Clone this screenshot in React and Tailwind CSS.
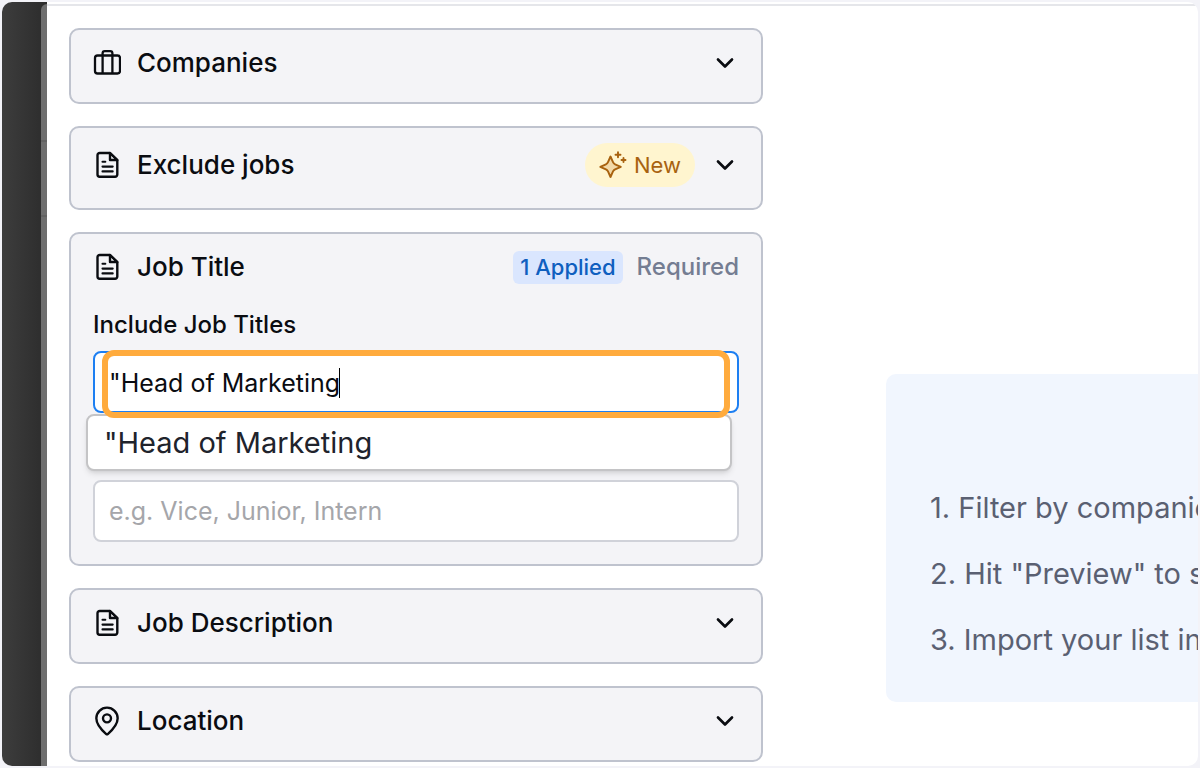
import { useState } from 'react'
import { ChevronDown, MapPin } from 'lucide-react'

function SuitcaseIcon() {
  return (
    <svg
      viewBox="0 0 28 28"
      className="size-7"
      fill="none"
      stroke="currentColor"
      strokeWidth="2.3"
      strokeLinejoin="round"
      aria-hidden="true"
    >
      <rect x="2" y="6.5" width="25" height="18" rx="2.6" />
      <path d="M9.6 24.500V4.300a2.200 2.200 0 0 1 2.200-2.200h5.400a2.200 2.200 0 0 1 2.200 2.200V24.500" />
    </svg>
  )
}

function DocumentIcon() {
  return (
    <svg
      viewBox="0 0 28 28"
      className="size-7"
      fill="none"
      stroke="currentColor"
      strokeWidth="2.4"
      strokeLinecap="round"
      strokeLinejoin="round"
      aria-hidden="true"
    >
      <path d="M17 2H6.700A2.200 2.200 0 0 0 4.500 4.200V23.500a2.200 2.200 0 0 0 2.200 2.200h15.400a2.200 2.200 0 0 0 2.200-2.200V9L17 2z" />
      <path d="M17 2v7h7.300z" />
      <path d="M9.500 10.800h2.800M9.500 15.600h10.200M9.500 20.400h10.200" strokeWidth="2.100" />
    </svg>
  )
}

function SparkleIcon() {
  return (
    <svg
      viewBox="0 0 28 28"
      className="size-7"
      fill="none"
      stroke="currentColor"
      strokeWidth="1.9"
      strokeLinecap="round"
      strokeLinejoin="round"
      aria-hidden="true"
    >
      <path
        d="M11.500 5.500l2.500 5.700a4 4 0 0 0 2.100 2.100l5.700 2.500-5.700 2.500a4 4 0 0 0-2.100 2.100L11.500 26l-2.500-5.600a4 4 0 0 0-2.100-2.100l-5.600-2.500 5.600-2.500a4 4 0 0 0 2.100-2.100z"
        fill="#f2d9a8"
      />
      <path d="M19 1.200v5M16.500 3.700h5M24.500 7v4M22.500 9h4" />
    </svg>
  )
}

function FilterCard({ icon, title, aside, children }) {
  return (
    <section className="rounded-[10px] border-2 border-[#bfc3ce] bg-[#f4f4f7] px-[22px] pt-[15px] pb-[21px]">
      <div className="flex items-center">
        <span className="flex w-7 shrink-0 justify-center">{icon}</span>
        <h2 className="ml-4 text-[26px] leading-9 font-medium">{title}</h2>
        <div className="ml-auto flex items-center">{aside}</div>
      </div>
      {children}
    </section>
  )
}

function ExpandButton({ label }) {
  return (
    <button type="button" aria-label={`Expand ${label}`} className="flex w-7 justify-center">
      <ChevronDown className="size-7" strokeWidth={2.3} />
    </button>
  )
}

const steps = ['1. Filter by companie', '2. Hit "Preview" to s', '3. Import your list in']

export default function App() {
  const [include, setInclude] = useState('"Head of Marketing')
  const [exclude, setExclude] = useState('')

  return (
    <div className="h-screen bg-[#f3f3f8] p-[2px] font-['Inter',sans-serif] text-[#0a0c11]">
      <div className="flex h-full overflow-hidden rounded-[10px] bg-white">
        <div className="flex w-[45px] shrink-0 bg-linear-to-r from-[#3d3d3d] to-[#2c2c2c]">
          <div className="mt-[2px] ml-auto flex w-[6px] flex-col gap-[73px] rounded-tl-md bg-[#6e6e6e] pt-[136px]">
            <span className="h-[2px] bg-[#636363]" />
            <span className="h-[2px] bg-[#636363]" />
          </div>
        </div>

        <main className="mt-[2px] flex min-w-0 flex-1 border-t-2 border-[#e5e6ea]">
          <div className="ml-[22px] flex w-[694px] shrink-0 flex-col gap-[22px] pt-[22px]">
            <FilterCard
              icon={<SuitcaseIcon />}
              title="Companies"
              aside={<ExpandButton label="Companies" />}
            />

            <FilterCard
              icon={<DocumentIcon />}
              title="Exclude jobs"
              aside={
                <>
                  <span className="mr-4 flex h-11 items-center gap-[7px] rounded-full bg-[#fff5cf] px-[14px] text-[22px] text-[#a8620f]">
                    <SparkleIcon />
                    New
                  </span>
                  <ExpandButton label="Exclude jobs" />
                </>
              }
            />

            <FilterCard
              icon={<DocumentIcon />}
              title="Job Title"
              aside={
                <>
                  <span className="mr-[14px] rounded-md bg-[#dae6fe] px-[7px] text-[22px] leading-[33px] font-medium text-[#0f5fbf]">
                    1 Applied
                  </span>
                  <span className="text-2xl font-medium text-[#747d92]">Required</span>
                </>
              }
            >
              <label htmlFor="include" className="mt-[22px] block text-2xl leading-9 font-medium">
                Include Job Titles
              </label>
              <div className="relative mt-2">
                <input
                  id="include"
                  type="text"
                  value={include}
                  onChange={(e) => setInclude(e.target.value)}
                  className="block h-[62px] w-full rounded-lg border-2 border-[#1d7ff2] bg-white px-[14px] pt-[2px] text-[25px] outline-none"
                />
                <span className="absolute top-[17px] left-[246px] h-[30px] w-px bg-black" />
                <ul className="absolute top-[63px] -left-[7px] w-full rounded-lg border-2 border-[#c4c4c6] bg-white px-4 pt-[6px] pb-[5px] text-[29px] leading-[42px] text-[#20232c] shadow-md">
                  <li>{include}</li>
                </ul>
                <div className="pointer-events-none absolute -top-px right-[9px] left-[9px] h-[68px] rounded-xl border-6 border-[#ffab3d]" />
              </div>
              <input
                type="text"
                aria-label="Exclude Job Titles"
                placeholder="e.g. Vice, Junior, Intern"
                value={exclude}
                onChange={(e) => setExclude(e.target.value)}
                className="mt-[67px] mb-px block h-[62px] w-full rounded-lg border-2 border-[#d0d2d9] bg-white px-[14px] text-[25px] placeholder:text-[#a5a6aa]"
              />
            </FilterCard>

            <FilterCard
              icon={<DocumentIcon />}
              title="Job Description"
              aside={<ExpandButton label="Job Description" />}
            />

            <FilterCard
              icon={<MapPin className="size-8 shrink-0" strokeWidth={1.8} />}
              title="Location"
              aside={<ExpandButton label="Location" />}
            />
          </div>

          <div className="ml-[123px] min-w-0 flex-1 pt-[368px]">
            <ol className="overflow-hidden rounded-l-[10px] bg-[#f1f6fe] pt-[101px] pb-[29px] pl-11 text-[29px] leading-[66px] whitespace-nowrap text-[#5a6072]">
              {steps.map((step) => (
                <li key={step}>{step}</li>
              ))}
            </ol>
          </div>
        </main>
      </div>
    </div>
  )
}
